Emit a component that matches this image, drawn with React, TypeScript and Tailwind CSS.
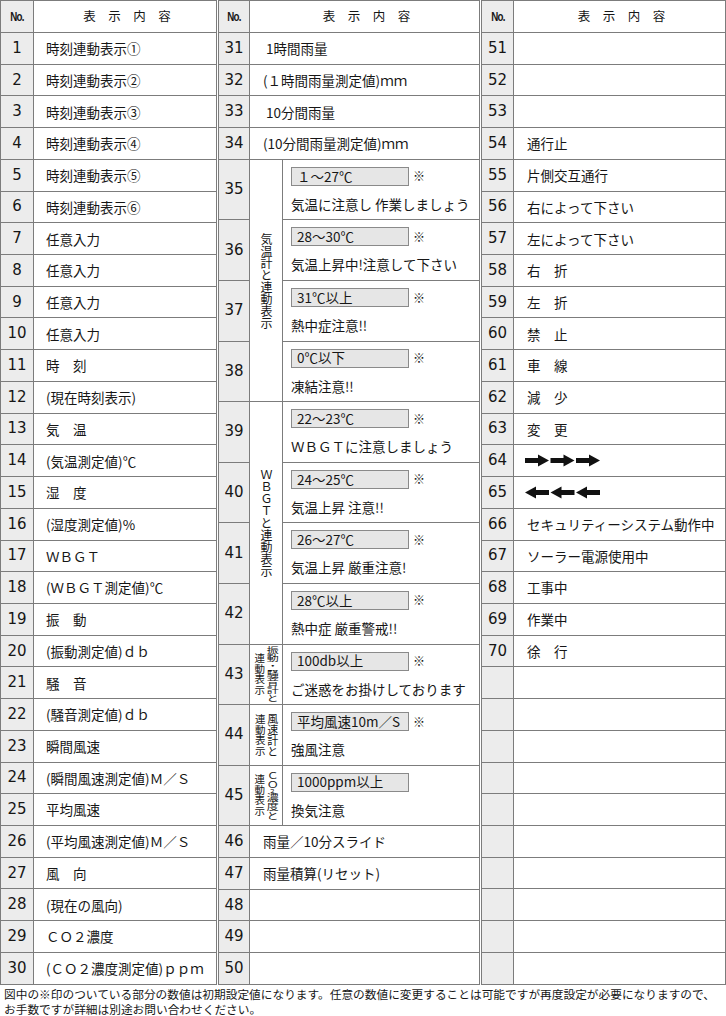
const B = 'border-[#7c7c7c]';

const left: string[] = [
  '時刻連動表示①',
  '時刻連動表示②',
  '時刻連動表示③',
  '時刻連動表示④',
  '時刻連動表示⑤',
  '時刻連動表示⑥',
  '任意入力',
  '任意入力',
  '任意入力',
  '任意入力',
  '時　刻',
  '(現在時刻表示)',
  '気　温',
  '(気温測定値)℃',
  '湿　度',
  '(湿度測定値)%',
  'ＷＢＧＴ',
  '(ＷＢＧＴ測定値)℃',
  '振　動',
  '(振動測定値)ｄｂ',
  '騒　音',
  '(騒音測定値)ｄｂ',
  '瞬間風速',
  '(瞬間風速測定値)Ｍ／Ｓ',
  '平均風速',
  '(平均風速測定値)Ｍ／Ｓ',
  '風　向',
  '(現在の風向)',
  'ＣＯ２濃度',
  '(ＣＯ２濃度測定値)ｐｐｍ',
];

const midTop = [
  { n: 31, t: <span className="pl-[3px]">1時間雨量</span> },
  { n: 32, t: '(１時間雨量測定値)ｍｍ' },
  { n: 33, t: <span className="pl-[3px]">10分間雨量</span> },
  { n: 34, t: '(10分間雨量測定値)ｍｍ' },
];

const midBlock = [
  { n: 35, box: '１～27℃', mark: true, text: '気温に注意し 作業しましょう' },
  { n: 36, box: '28～30℃', mark: true, text: '気温上昇中!注意して下さい' },
  { n: 37, box: '31℃以上', mark: true, text: '熱中症注意!!' },
  { n: 38, box: '0℃以下', mark: true, text: '凍結注意!!' },
  { n: 39, box: '22～23℃', mark: true, text: 'ＷＢＧＴに注意しましょう' },
  { n: 40, box: '24～25℃', mark: true, text: '気温上昇 注意!!' },
  { n: 41, box: '26～27℃', mark: true, text: '気温上昇 厳重注意!' },
  { n: 42, box: '28℃以上', mark: true, text: '熱中症 厳重警戒!!' },
  { n: 43, box: '100db以上', mark: true, text: 'ご迷惑をお掛けしております' },
  { n: 44, box: '平均風速10m／S', mark: true, text: '強風注意' },
  { n: 45, box: '1000ppm以上', mark: false, text: '換気注意' },
];

const midBottom = [
  { n: 46, t: '雨量／10分スライド' },
  { n: 47, t: '雨量積算(リセット)' },
  { n: 48, t: '' },
  { n: 49, t: '' },
  { n: 50, t: '' },
];

function Arrows({ dir }: { dir: 'right' | 'left' }) {
  const one = (x: number) =>
    dir === 'right'
      ? `${x},4 ${x + 13},4 ${x + 13},0.5 ${x + 24},6.5 ${x + 13},12.5 ${x + 13},9 ${x},9`
      : `${x + 24},4 ${x + 11},4 ${x + 11},0.5 ${x},6.5 ${x + 11},12.5 ${x + 11},9 ${x + 24},9`;
  return (
    <svg width="76" height="13" viewBox="0 0 76 13" className="-ml-[2px]">
      {[0, 25.5, 51].map((x) => (
        <polygon key={x} points={one(x)} fill="#111" />
      ))}
    </svg>
  );
}

const right: React.ReactNode[] = [
  '',
  '',
  '',
  '通行止',
  '片側交互通行',
  '右によって下さい',
  '左によって下さい',
  '右　折',
  '左　折',
  '禁　止',
  '車　線',
  '減　少',
  '変　更',
  <Arrows dir="right" />,
  <Arrows dir="left" />,
  'セキュリティーシステム動作中',
  'ソーラー電源使用中',
  '工事中',
  '作業中',
  '徐　行',
];

function Num({ n, w }: { n?: number | string; w: string }) {
  return (
    <div
      className={`${w} shrink-0 border-r ${B} bg-[#ececec] flex items-center justify-center font-['DejaVu_Sans',sans-serif] text-[15px] leading-none`}
    >
      {n}
    </div>
  );
}

function Header({ w }: { w: string }) {
  return (
    <div className="flex h-[31px]">
      <div className={`${w} shrink-0 border-r ${B} bg-[#ececec] flex items-center justify-center`}>
        <span className="inline-block scale-x-75 font-['Liberation_Sans',sans-serif] font-bold text-[13px] tracking-[-1px]">
          No.
        </span>
      </div>
      <div className="flex-1 flex items-center justify-center text-[12.5px] pl-[4px]">表　示　内　容</div>
    </div>
  );
}

function Row({ n, w, pad, children }: { n?: number | string; w: string; pad: string; children?: React.ReactNode }) {
  return (
    <div className={`flex h-[31.73px] border-t ${B}`}>
      <Num n={n} w={w} />
      <div className={`flex-1 flex items-center ${pad} text-[13.5px] whitespace-nowrap`}>{children}</div>
    </div>
  );
}

const V = '[writing-mode:vertical-rl] leading-none whitespace-nowrap';

function MidBlock() {
  return (
    <div className="flex">
      <div className="w-[31px] shrink-0 flex flex-col">
        {midBlock.map((m) => (
          <div key={m.n} className={`h-[60.58px] border-t ${B} flex`}>
            <Num n={m.n} w="w-[31px]" />
          </div>
        ))}
      </div>
      <div className={`w-[33px] shrink-0 border-r ${B} flex flex-col`}>
        <div className={`h-[242.32px] border-t ${B} flex items-center justify-center`}>
          <span className={`${V} text-[12px]`}>気温計と連動表示</span>
        </div>
        <div className={`h-[242.32px] border-t ${B} flex items-center justify-center`}>
          <span className={`${V} text-[12px]`}>ＷＢＧＴと連動表示</span>
        </div>
        <div className={`h-[60.58px] border-t ${B} flex items-center justify-center gap-[2px]`}>
          <span className={`${V} text-[10.5px]`}>連動表示</span>
          <span className={`${V} text-[12px] inline-block scale-y-[0.66]`}>振動・騒音計と</span>
        </div>
        <div className={`h-[60.58px] border-t ${B} flex items-center justify-center gap-[2px]`}>
          <span className={`${V} text-[10.5px]`}>連動表示</span>
          <span className={`${V} text-[11px]`}>風速計と</span>
        </div>
        <div className={`h-[60.58px] border-t ${B} flex items-center justify-center gap-[2px]`}>
          <span className={`${V} text-[10.5px]`}>連動表示</span>
          <span className={`${V} text-[12px] inline-block scale-y-[0.72]`}>
            ＣＯ<span className="text-[7px]">２</span>濃度と
          </span>
        </div>
      </div>
      <div className="flex-1 flex flex-col">
        {midBlock.map((m) => (
          <div key={m.n} className={`h-[60.58px] border-t ${B} pl-[8px] pt-[7px]`}>
            <div className="flex items-center h-[19px]">
              <div className="w-[118px] h-[19px] border border-[#8a8a8a] bg-[#e6e6e6] pl-[5px] flex items-center text-[13.5px] leading-none whitespace-nowrap">
                {m.box}
              </div>
              {m.mark && <span className="ml-[4px] text-[12px] leading-none">※</span>}
            </div>
            <div className="mt-[10px] text-[13.5px] leading-[16px] whitespace-nowrap">{m.text}</div>
          </div>
        ))}
      </div>
    </div>
  );
}

export default function App() {
  return (
    <div className="w-[726px] h-[1016px] bg-white text-[#161616] font-['Noto_Sans_CJK_JP',sans-serif] overflow-hidden">
      <div className="flex gap-[1px]">
        <div className={`w-[217px] border ${B} flex flex-col`}>
          <Header w="w-[33px]" />
          {left.map((t, i) => (
            <Row key={i} n={i + 1} w="w-[33px]" pad="pl-[12px]">
              {t}
            </Row>
          ))}
        </div>

        <div className={`w-[262px] border ${B} flex flex-col`}>
          <Header w="w-[31px]" />
          {midTop.map((r) => (
            <Row key={r.n} n={r.n} w="w-[31px]" pad="pl-[13px]">
              {r.t}
            </Row>
          ))}
          <MidBlock />
          {midBottom.map((r) => (
            <Row key={r.n} n={r.n} w="w-[31px]" pad="pl-[13px]">
              {r.t}
            </Row>
          ))}
        </div>

        <div className={`w-[245px] border ${B} flex flex-col`}>
          <Header w="w-[32px]" />
          {Array.from({ length: 30 }).map((_, i) => (
            <Row key={i} n={i < 20 ? 51 + i : undefined} w="w-[32px]" pad="pl-[13px]">
              {right[i]}
            </Row>
          ))}
        </div>
      </div>

      <div className="mt-[1px] pl-[4px] text-[11.7px] whitespace-nowrap">
        <div className="h-[15px] leading-[15px]">
          図中の※印のついている部分の数値は初期設定値になります。任意の数値に変更することは可能ですが再度設定が必要になりますので、
        </div>
        <div className="h-[15px] leading-[15px]">お手数ですが詳細は別途お問い合わせください。</div>
      </div>
    </div>
  );
}
